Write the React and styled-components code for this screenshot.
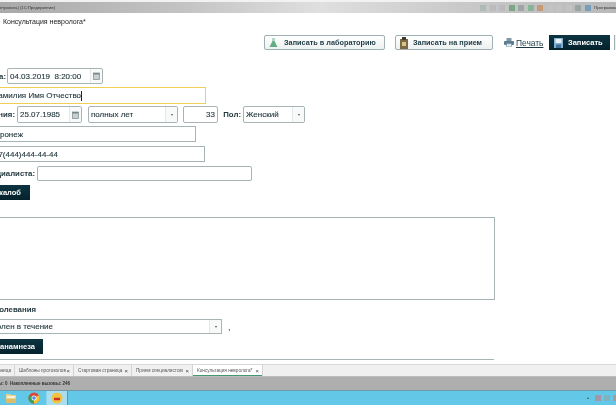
import React from 'react'
import styled, { createGlobalStyle } from 'styled-components'

const Global = createGlobalStyle`
  html, body { margin: 0; padding: 0; background: #fff; }
  body { font-family: "Liberation Sans", Arial, sans-serif; }
`

const Window = styled.div`
  width: 616px;
  height: 405px;
  overflow: hidden;
  display: flex;
  flex-direction: column;
  filter: blur(0.4px);
`

const TitleBar = styled.div`
  height: 13px;
  flex: none;
  display: flex;
  align-items: center;
  justify-content: space-between;
  box-sizing: border-box;
  border-top: 2px solid #f2f2f2;
  background: linear-gradient(90deg, #a9a9a9 0%, #c4c4c4 30%, #dfdfdf 52%, #c9c9c9 75%, #b9b9b9 100%);
  font-size: 4.2px;
  color: #333;
  white-space: nowrap;
`

const TitleIcons = styled.div`
  width: 136px;
  flex: none;
  overflow: hidden;
  display: flex;
  align-items: center;
  gap: 3.5px;
  font-size: 4.4px;
`

const TinyIcon = styled.span`
  width: 6px;
  height: 6px;
  flex: none;
  background: ${p => p.$c || '#9aa5a5'};
  opacity: 0.7;
  margin-left: ${p => p.$gap || 0}px;
`

const Content = styled.div`
  flex: 1;
  min-height: 0;
  overflow: hidden;
  background: #fff;
  color: #1e2e33;
`

const PageTitle = styled.div`
  font-size: 7px;
  line-height: 12px;
  padding: 3px 0 0 3px;
  color: #222;
`

const Toolbar = styled.div`
  display: flex;
  align-items: center;
  height: 15px;
  margin-top: 7px;
  padding-left: 264px;
`

const LightButton = styled.div`
  width: ${p => p.$w}px;
  height: 15px;
  margin-right: ${p => p.$mr}px;
  flex: none;
  box-sizing: border-box;
  display: flex;
  align-items: center;
  gap: ${p => p.$gap}px;
  padding-left: ${p => p.$pl}px;
  border: 1px solid #9fb0b2;
  border-radius: 2px;
  background: linear-gradient(#ffffff, #eef1f1);
  font-size: 7.3px;
  font-weight: bold;
  color: #1d3a44;
  white-space: nowrap;
  svg { flex: none; }
`

const PrintLink = styled.div`
  width: 45px;
  flex: none;
  display: flex;
  align-items: center;
  gap: 2px;
  font-size: 8.4px;
  color: #1d3a44;
  span { text-decoration: underline; }
  svg { flex: none; }
`

const DarkButton = styled.div`
  width: ${p => p.$w}px;
  height: 15px;
  flex: none;
  box-sizing: border-box;
  display: flex;
  align-items: center;
  justify-content: ${p => (p.$end ? 'flex-end' : 'flex-start')};
  gap: 5px;
  padding: ${p => (p.$end ? `0 ${p.$pr}px 0 0` : '0 0 0 5px')};
  background: linear-gradient(#0c3440, #04222c);
  color: #fff;
  font-size: 7.5px;
  font-weight: bold;
  white-space: nowrap;
  overflow: hidden;
  svg { flex: none; }
`

const EdgeButton = styled.div`
  width: 4px;
  height: 15px;
  margin-left: 4px;
  flex: none;
  background: #eef1f1;
  border-left: 1px solid #9fb0b2;
`

const Row = styled.div`
  display: flex;
  align-items: center;
  height: ${p => p.$h}px;
  margin-top: ${p => p.$mt}px;
`

const Label = styled.div`
  width: ${p => p.$w}px;
  flex: none;
  overflow: hidden;
  display: flex;
  justify-content: flex-end;
  margin-left: ${p => p.$ml || 0}px;
  margin-right: ${p => p.$mr || 0}px;
  font-size: 7.8px;
  font-weight: bold;
  color: #24393f;
  white-space: nowrap;
`

const Field = styled.div`
  width: ${p => p.$w}px;
  height: 100%;
  flex: none;
  box-sizing: border-box;
  display: flex;
  align-items: center;
  justify-content: ${p => (p.$right ? 'flex-end' : 'flex-start')};
  margin-left: ${p => p.$ml || 0}px;
  padding: 0 ${p => (p.$right ? 2 : 0)}px 0 ${p => (p.$open ? 0 : 2)}px;
  border: 1px solid ${p => (p.$focus ? '#f0cf55' : '#a6b4b6')};
  border-left-width: ${p => (p.$open ? 0 : 1)}px;
  border-radius: ${p => (p.$open ? 0 : 2)}px;
  font-size: 8px;
  color: #1f343b;
  -webkit-text-stroke: 0.12px #1f343b;
  white-space: nowrap;
  overflow: hidden;
`

const FieldText = styled.span`
  flex: ${p => (p.$w ? 'none' : 1)};
  width: ${p => (p.$w ? `${p.$w}px` : 'auto')};
  overflow: hidden;
  display: flex;
  justify-content: ${p => (p.$w ? 'flex-end' : 'flex-start')};
`

const Spacer = styled.span`
  flex: 1;
`

const Caret = styled.span`
  width: 1px;
  height: 10px;
  flex: none;
  background: #222;
`

const FieldAddon = styled.span`
  width: 11px;
  height: 100%;
  flex: none;
  display: flex;
  align-items: center;
  justify-content: center;
  border-left: 1px solid #e3e8e8;
  background: #f8f9f9;
`

const ArrowGlyph = styled.span`
  width: 0;
  height: 0;
  border-left: 1.5px solid transparent;
  border-right: 1.5px solid transparent;
  border-top: 2px solid #555;
  transform: ${p => (p.$up ? 'rotate(180deg)' : 'none')};
`

const TextArea = styled.div`
  width: 495px;
  height: 83px;
  margin-top: 17px;
  box-sizing: border-box;
  border: 1px solid #a6b4b6;
  border-left: none;
`

const Heading = styled.div`
  width: 36px;
  margin-top: 5px;
  height: 10px;
  line-height: 10px;
  overflow: hidden;
  display: flex;
  justify-content: flex-end;
  font-size: 7.8px;
  font-weight: bold;
  color: #24393f;
  white-space: nowrap;
`

const Comma = styled.span`
  margin-left: 6px;
  font-size: 9px;
  color: #24393f;
`

const Divider = styled.div`
  width: 494px;
  height: 1px;
  margin-top: 5px;
  background: #a6b4b6;
`

const TabBar = styled.div`
  height: 13px;
  flex: none;
  box-sizing: border-box;
  display: flex;
  border-top: 1px solid #d8d8d8;
  border-bottom: 1px solid #bdbdbd;
  background: #f0f0f0;
`

const Tab = styled.div`
  width: ${p => p.$w}px;
  flex: none;
  box-sizing: border-box;
  display: flex;
  align-items: center;
  justify-content: ${p => (p.$clip ? 'flex-end' : 'space-between')};
  padding: 0 3px 0 ${p => (p.$clip ? 0 : 4)}px;
  overflow: hidden;
  border-right: 1px solid #d4d4d4;
  background: ${p => (p.$active ? '#fff' : 'transparent')};
  box-shadow: ${p => (p.$active ? 'inset 0 -1px 0 #3f9a70' : 'none')};
  font-size: 4.7px;
  color: #555;
  white-space: nowrap;
`

const Close = styled.span`
  font-size: 6px;
  color: #444;
`

const StatusBar = styled.div`
  width: 70px;
  height: 13px;
  display: flex;
  align-items: center;
  justify-content: flex-end;
  font-size: 4.5px;
  font-weight: bold;
  color: #333;
  white-space: nowrap;
  overflow: hidden;
`

const StatusTrack = styled.div`
  flex: none;
  background: #aeaeae;
  border-bottom: 1px solid #6f9aa8;
`

const Taskbar = styled.div`
  height: 14px;
  flex: none;
  display: flex;
  align-items: center;
  background: #63c8e8;
`

const TaskSlot = styled.div`
  width: 22px;
  height: 100%;
  flex: none;
  display: flex;
  align-items: center;
  justify-content: center;
  margin-left: ${p => p.$ml || 0}px;
  background: ${p => (p.$active ? '#a9def0' : 'transparent')};
  box-shadow: ${p => (p.$active ? 'inset -1px 0 0 #4e9db8, inset 1px 0 0 #8fd4ea' : 'none')};
`

const Tray = styled.div`
  margin-left: auto;
  display: flex;
  align-items: center;
  gap: 3px;
  margin-right: -3px;
`

const FlaskIcon = () => (
  <svg width="11" height="11" viewBox="0 0 11 11">
    <path d="M4.5 1h2v3l3 6H1.5l3-6z" fill="#5fae84" />
    <path d="M4.5 1h2v3H4.5z" fill="#b9d6c6" />
  </svg>
)

const BagIcon = () => (
  <svg width="10" height="12" viewBox="0 0 10 12">
    <rect x="1" y="2" width="8" height="10" fill="#7d6a44" />
    <rect x="3" y="0" width="4" height="3" fill="#3e3a2c" />
    <rect x="3" y="5" width="4" height="4" fill="#d9c48c" />
  </svg>
)

const PrinterIcon = () => (
  <svg width="10" height="9" viewBox="0 0 10 9">
    <rect x="2.5" y="0" width="5" height="3" fill="#7f98a8" />
    <rect x="0" y="3" width="10" height="4" rx="1" fill="#5c7c92" />
    <rect x="2.5" y="5.5" width="5" height="3.5" fill="#dfe7ec" stroke="#5c7c92" strokeWidth="0.5" />
  </svg>
)

const SaveIcon = () => (
  <svg width="9" height="10" viewBox="0 0 9 10">
    <rect width="9" height="10" fill="#86b0d0" />
    <rect x="1.5" y="1" width="6" height="4" fill="#e9f1f6" />
    <rect x="2" y="6.5" width="5" height="3.5" fill="#3f6f94" />
  </svg>
)

const CalendarIcon = () => (
  <svg width="7" height="8" viewBox="0 0 7 8">
    <rect x="0.5" y="1" width="6" height="6.5" fill="#c9cfcf" stroke="#7b8888" strokeWidth="0.7" />
    <rect x="0.5" y="1" width="6" height="1.5" fill="#7b8888" />
  </svg>
)

const FolderIcon = () => (
  <svg width="12" height="11" viewBox="0 0 12 11">
    <path d="M1 1h4l1 1h5v8H1z" fill="#e8d28e" />
    <rect x="2" y="3" width="8" height="2" fill="#f6f0d8" />
    <rect x="1" y="6" width="10" height="4" fill="#d9bd6c" />
  </svg>
)

const ChromeIcon = () => (
  <svg width="12" height="12" viewBox="0 0 12 12">
    <circle cx="6" cy="6" r="5.5" fill="#d9483b" />
    <path d="M6 6L1.2 3.2A5.5 5.5 0 0 0 6 11.5z" fill="#3d9e50" />
    <path d="M6 6v5.5A5.5 5.5 0 0 0 10.8 3.2z" fill="#f4c430" />
    <circle cx="6" cy="6" r="2.5" fill="#fff" />
    <circle cx="6" cy="6" r="1.8" fill="#4a8af0" />
  </svg>
)

const OneCIcon = () => (
  <svg width="12" height="12" viewBox="0 0 12 12">
    <circle cx="6" cy="6" r="5.5" fill="#f3c33f" />
    <path d="M3 7h6" stroke="#c8322a" strokeWidth="2.5" />
  </svg>
)

const DateAddon = () => <FieldAddon><CalendarIcon /></FieldAddon>
const SelectAddon = () => <FieldAddon><ArrowGlyph /></FieldAddon>

const tabs = [
  { w: 15, title: 'Главная страница', clip: true },
  { w: 59, title: 'Шаблоны протоколов' },
  { w: 58, title: 'Стартовая страница' },
  { w: 61, title: 'Прием специалистом' },
  { w: 70, title: 'Консультация невролога*', active: true },
]

const topIcons = ['#a7b3b3', '#b8b8b8', '#b8b8b8', '#5f9a6c', '#8a9a9a', '#6fae84', '#c98a54', '#c4c4c4', '#c4c4c4', '#c4c4c4', '#8a9a9a', '#5b93b8']

const App = () => (
  <Window>
    <Global />
    <TitleBar>
      <span>нтролога) (1С:Предприятие)</span>
      <TitleIcons>
        {topIcons.map((c, i) => <TinyIcon key={i} $c={c} />)}
        <span>Программист</span>
      </TitleIcons>
    </TitleBar>

    <Content>
      <PageTitle>Консультация невролога*</PageTitle>

      <Toolbar>
        <LightButton $w={121} $mr={10} $pl={3} $gap={5}><FlaskIcon />Записать в лабораторию</LightButton>
        <LightButton $w={98} $mr={11} $pl={3} $gap={4}><BagIcon />Записать на прием</LightButton>
        <PrintLink><PrinterIcon /><span>Печать</span></PrintLink>
        <DarkButton $w={61}><SaveIcon />Записать</DarkButton>
        <EdgeButton />
      </Toolbar>

      <Row $h={16} $mt={18}>
        <Label $w={6} $mr={1}>Дата приема:</Label>
        <Field $w={96}>
          <FieldText>04.03.2019&nbsp; 8:20:00</FieldText>
          <DateAddon />
        </Field>
      </Row>

      <Row $h={17} $mt={3}>
        <Field $w={206} $open $focus>
          <FieldText $w={81}>Фамилия Имя Отчество</FieldText>
          <Caret />
        </Field>
      </Row>

      <Row $h={17} $mt={2}>
        <Label $w={15} $mr={2}>Дата рождения:</Label>
        <Field $w={65}>
          <FieldText>25.07.1985</FieldText>
          <DateAddon />
        </Field>
        <Field $w={90} $ml={6}>
          <FieldText>полных лет</FieldText>
          <SelectAddon />
        </Field>
        <Field $w={35} $ml={5} $right>33</Field>
        <Label $w={18} $ml={5} $mr={2}>Пол:</Label>
        <Field $w={62}>
          <FieldText>Женский</FieldText>
          <SelectAddon />
        </Field>
      </Row>

      <Row $h={16} $mt={3}>
        <Field $w={196} $open>
          <FieldText $w={23}>Воронеж</FieldText>
        </Field>
      </Row>

      <Row $h={16} $mt={4}>
        <Field $w={205} $open>
          <FieldText $w={58}>+7(444)444-44-44</FieldText>
        </Field>
      </Row>

      <Row $h={15} $mt={4}>
        <Label $w={35} $mr={2}>Вызов специалиста:</Label>
        <Field $w={215} />
      </Row>

      <Row $h={15} $mt={4}>
        <DarkButton $w={30} $end $pr={9}>Шаблон жалоб</DarkButton>
      </Row>

      <TextArea />

      <Heading>Анамнез заболевания</Heading>

      <Row $h={15} $mt={4}>
        <Field $w={222} $open>
          <FieldText $w={53}>Болен в течение</FieldText>
          <Spacer />
          <SelectAddon />
        </Field>
        <Comma>,</Comma>
      </Row>

      <Row $h={15} $mt={5}>
        <DarkButton $w={43} $end $pr={8}>Шаблон анамнеза</DarkButton>
      </Row>

      <Divider />
    </Content>

    <TabBar>
      {tabs.map(t => (
        <Tab key={t.title} $w={t.w} $clip={t.clip} $active={t.active}>
          {t.title}
          {!t.clip && <Close>×</Close>}
        </Tab>
      ))}
    </TabBar>

    <StatusTrack>
      <StatusBar>Вызовы: 0 &nbsp;Накопленные вызовы: 246</StatusBar>
    </StatusTrack>

    <Taskbar>
      <TaskSlot $ml={0}><FolderIcon /></TaskSlot>
      <TaskSlot $ml={1}><ChromeIcon /></TaskSlot>
      <TaskSlot $ml={1} $active><OneCIcon /></TaskSlot>
      <Tray>
        <ArrowGlyph $up />
        <TinyIcon $c="#c0808a" $gap={3} />
        <TinyIcon $c="#8aa8b0" />
        <TinyIcon $c="#c08a70" />
      </Tray>
    </Taskbar>
  </Window>
)

export default App
